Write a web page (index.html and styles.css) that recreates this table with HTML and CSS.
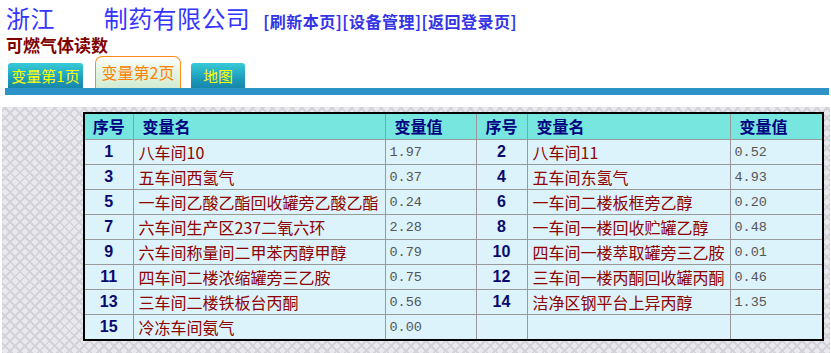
FILE: index.html
```html
<!DOCTYPE html>
<html lang="zh">
<head>
<meta charset="utf-8">
<title>可燃气体读数</title>
<link rel="stylesheet" href="styles.css">
</head>
<body>
<div class="header">
  <div class="title-line"><span class="company">浙江<span class="redacted"></span>制药有限公司</span><span class="links"><a href="#">[刷新本页]</a><a href="#">[设备管理]</a><a href="#">[返回登录页]</a></span></div>
  <div class="subtitle">可燃气体读数</div>
</div>
<div class="tabs">
  <a class="tab tab-first" href="#">变量第1页</a>
  <a class="tab tab-active" href="#">变量第2页</a>
  <a class="tab tab-map" href="#">地图</a>
</div>
<div class="bar"></div>
<div class="panel">
  <table class="data">
    <colgroup>
      <col class="c-no-l"><col class="c-name-l"><col class="c-val-l">
      <col class="c-no-r"><col class="c-name-r"><col class="c-val-r">
    </colgroup>
    <thead>
      <tr>
        <th class="h-no">序号</th><th class="h-left">变量名</th><th class="h-left">变量值</th>
        <th class="h-no">序号</th><th class="h-left">变量名</th><th class="h-left">变量值</th>
      </tr>
    </thead>
    <tbody>
      <tr><td class="no">1</td><td class="name">八车间10</td><td class="val">1.97</td><td class="no">2</td><td class="name">八车间11</td><td class="val">0.52</td></tr>
      <tr><td class="no">3</td><td class="name">五车间西氢气</td><td class="val">0.37</td><td class="no">4</td><td class="name">五车间东氢气</td><td class="val">4.93</td></tr>
      <tr><td class="no">5</td><td class="name">一车间乙酸乙酯回收罐旁乙酸乙酯</td><td class="val">0.24</td><td class="no">6</td><td class="name">一车间二楼板框旁乙醇</td><td class="val">0.20</td></tr>
      <tr><td class="no">7</td><td class="name">六车间生产区237二氧六环</td><td class="val">2.28</td><td class="no">8</td><td class="name">一车间一楼回收贮罐乙醇</td><td class="val">0.48</td></tr>
      <tr><td class="no">9</td><td class="name">六车间称量间二甲苯丙醇甲醇</td><td class="val">0.79</td><td class="no">10</td><td class="name">四车间一楼萃取罐旁三乙胺</td><td class="val">0.01</td></tr>
      <tr><td class="no">11</td><td class="name">四车间二楼浓缩罐旁三乙胺</td><td class="val">0.75</td><td class="no">12</td><td class="name">三车间一楼丙酮回收罐丙酮</td><td class="val">0.46</td></tr>
      <tr><td class="no">13</td><td class="name">三车间二楼铁板台丙酮</td><td class="val">0.56</td><td class="no">14</td><td class="name">洁净区钢平台上异丙醇</td><td class="val">1.35</td></tr>
      <tr><td class="no">15</td><td class="name">冷冻车间氨气</td><td class="val">0.00</td><td class="no"></td><td class="name"></td><td class="val"></td></tr>
    </tbody>
  </table>
</div>
</body>
</html>
```

FILE: styles.css
```css
html, body {
  margin: 0;
  padding: 0;
  background: #ffffff;
  font-family: "Noto Sans CJK SC", "Liberation Sans", sans-serif;
}

.header {
  padding-left: 6px;
}

.title-line {
  line-height: normal;
  white-space: nowrap;
}

.company {
  font-size: 24px;
  letter-spacing: 0.4px;
  color: #3535ff;
}

.redacted {
  display: inline-block;
  width: 49px;
}

.links {
  margin-left: 13px;
  font-size: 16px;
  font-weight: bold;
  letter-spacing: 0.5px;
}

.links a {
  color: #3434e6;
  text-decoration: none;
}

.subtitle {
  margin-top: -3px;
  line-height: normal;
  font-size: 17px;
  font-weight: bold;
  color: #800000;
}

.tabs {
  display: flex;
  align-items: flex-end;
  margin-top: -1px;
  margin-left: 8px;
  height: 32px;
}

.tab {
  display: flex;
  align-items: center;
  justify-content: center;
  box-sizing: border-box;
  text-decoration: none;
  font-size: 15px;
  white-space: nowrap;
}

.tab-first,
.tab-map {
  height: 25px;
  color: #ffff00;
  border-radius: 3px 3px 0 0;
  background: linear-gradient(#38cad6 0%, #25aec6 40%, #1b96b7 70%, #1787ab 100%);
}

.tab-first {
  width: 75px;
}

.tab-active {
  width: 86px;
  height: 32px;
  margin-left: 12px;
  margin-right: 10px;
  padding-bottom: 2px;
  color: #ff8000;
  font-size: 16px;
  border: 1px solid #ff8c1a;
  border-bottom: none;
  border-radius: 7px 7px 0 0;
  background: linear-gradient(#ffffff 0%, #e4f4e2 45%, #d2ecd2 100%);
}

.tab-map {
  width: 54px;
}

.bar {
  margin-left: 5px;
  width: 824px;
  height: 7px;
  background: #2e94c8;
}

.panel {
  margin-top: 12px;
  margin-left: 2px;
  width: 828px;
  padding-top: 5px;
  padding-bottom: 20px;
  padding-left: 81px;
  box-sizing: border-box;
  background-color: #e8e8ee;
  background-image:
    repeating-linear-gradient(45deg, transparent 0 5px, #d3d3d9 5px 7px),
    repeating-linear-gradient(-45deg, transparent 0 5px, #d3d3d9 5px 7px);
}

.data {
  width: 739px;
  table-layout: fixed;
  border-collapse: collapse;
  border: 2px solid #000000;
}

.c-no-l { width: 49px; }
.c-name-l { width: 252px; }
.c-val-l { width: 91px; }
.c-no-r { width: 51px; }
.c-name-r { width: 203px; }
.c-val-r { width: 93px; }

.data th,
.data td {
  border: 1px solid #999999;
  padding: 0;
  white-space: nowrap;
  overflow: hidden;
}

.data thead tr {
  height: 26px;
}

.data th {
  background: #76e6de;
  color: #000080;
  font-size: 16px;
  font-weight: bold;
}

.data th.h-no {
  text-align: center;
}

.data th.h-left {
  text-align: left;
  padding-left: 9px;
}

.data tbody tr {
  height: 25px;
}

.data td {
  background: #dcf3fb;
}

.data td.no {
  text-align: center;
  font-family: "Liberation Sans", Arial, sans-serif;
  font-weight: bold;
  font-size: 16px;
  color: #0a0a6e;
}

.data td.name {
  padding-left: 5px;
  font-size: 16px;
  color: #8f0000;
}

.data td.val {
  padding-left: 4px;
  padding-top: 2px;
  font-family: "Liberation Mono", "DejaVu Sans Mono", monospace;
  font-size: 13.5px;
  color: #555555;
}
```
